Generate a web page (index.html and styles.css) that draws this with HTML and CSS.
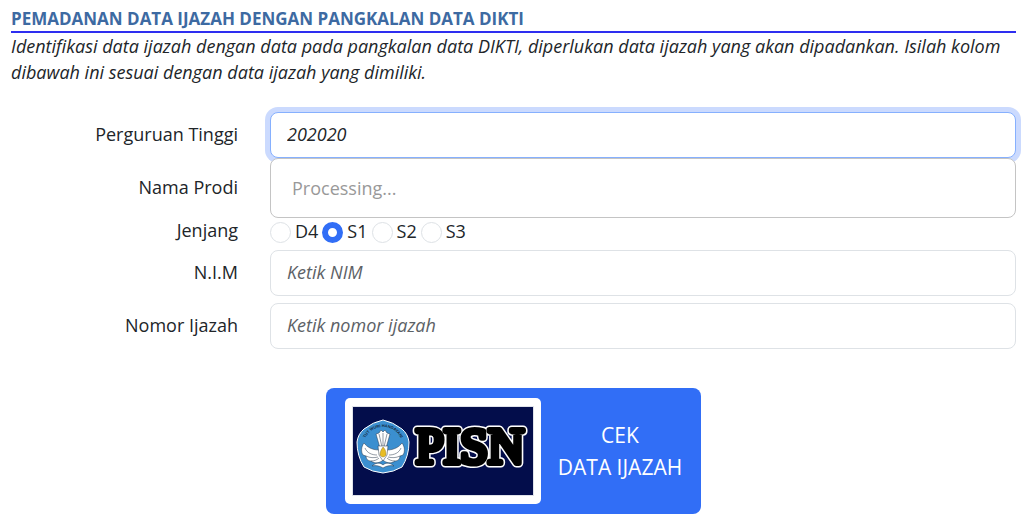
FILE: index.html
```html
<!doctype html>
<html lang="id">
<head>
    <meta charset="UTF-8">
    <meta name="viewport" content="width=device-width, initial-scale=1.0">
    <title>Pemadanan Data Ijazah</title>
    <link rel="stylesheet" href="styles.css">
</head>
<body>
<div class="page">
    <h1 class="title">PEMADANAN DATA IJAZAH DENGAN PANGKALAN DATA DIKTI</h1>
    <p class="intro">Identifikasi data ijazah dengan data pada pangkalan data DIKTI, diperlukan data ijazah yang akan dipadankan. Isilah kolom dibawah ini sesuai dengan data ijazah yang dimiliki.</p>

    <form class="form">
        <div class="row">
            <label class="label" for="pt">Perguruan Tinggi</label>
            <div class="field">
                <input class="input focused" type="text" id="pt" value="202020" autocomplete="off">
                <div class="suggest">Processing...</div>
            </div>
        </div>
        <div class="row">
            <label class="label" for="prodi">Nama Prodi</label>
            <div class="field">
                <input class="input" type="text" id="prodi">
            </div>
        </div>
        <div class="row row-radio">
            <span class="label" id="jenjang">Jenjang</span>
            <div class="radios" role="radiogroup" aria-labelledby="jenjang">
                <input type="radio" name="jenjang" id="d4"><label for="d4">D4</label>
                <input type="radio" name="jenjang" id="s1" checked><label for="s1">S1</label>
                <input type="radio" name="jenjang" id="s2"><label for="s2">S2</label>
                <input type="radio" name="jenjang" id="s3"><label for="s3">S3</label>
            </div>
        </div>
        <div class="row">
            <label class="label" for="nim">N.I.M</label>
            <div class="field">
                <input class="input" type="text" id="nim" placeholder="Ketik NIM">
            </div>
        </div>
        <div class="row">
            <label class="label" for="nomor">Nomor Ijazah</label>
            <div class="field">
                <input class="input" type="text" id="nomor" placeholder="Ketik nomor ijazah">
            </div>
        </div>

        <button class="submit" type="button">
            <span class="thumb">
                <svg class="logo" width="182" height="90" viewBox="0 0 182 90">
                    <rect width="182" height="90" fill="#dfe2ea"/>
                    <rect x="1" y="1" width="180" height="88" fill="#030d4b"/>
                    <!-- emblem -->
                    <path d="M31 14 Q41 16 50 23 Q56 28 57 36 Q57 50 50 61 Q42 66 31 67 Q20 66 12 61 Q5 50 5 36 Q6 28 12 23 Q21 16 31 14Z" fill="#3b8fd0" stroke="#fff" stroke-width="1"/>
                    <path id="arc" d="M12 36 C17 16 45 16 50 36" fill="none"/>
                    <text class="motto"><textPath href="#arc" startOffset="50%">TUT WURI HANDAYANI</textPath></text>
                    <g fill="#fff" stroke="#26364a" stroke-width=".5" stroke-linejoin="round">
                        <path d="M28 42 L24 28 L27 27 L29 24 L31 26 L33 24 L35 27 L38 28 L34 42Z"/>
                        <path d="M27 28 L30 41 M31 27 V41 M35 28 L32 41" fill="none"/>
                        <path d="M27 44 C20 44 15 41 12 37 C9 41 9 46 11 49 L14 50 C14 53 16 55 19 55 C23 58 28 57 31 54 C34 57 39 58 43 55 C46 55 48 53 48 50 L51 49 C53 46 53 41 50 37 C47 41 42 44 35 44 L31 41Z"/>
                        <path d="M13 42 C15 47 20 49 25 49 M14 50 C18 52 22 52 26 51 M19 55 C22 55 25 54 27 52 M49 42 C47 47 42 49 37 49 M48 50 C44 52 40 52 36 51 M43 55 C40 55 37 54 35 52" fill="none"/>
                        <path d="M26 40 H36 L35 49 L31 55 L27 49Z"/>
                        <path d="M31 59 C28 56 23 57 20 60 C24 59 28 60 31 62 C34 60 38 59 42 60 C39 57 34 56 31 59Z"/>
                    </g>
                    <path d="M31 41 C34 44 34 47 34 49 Q31 53 28 49 C28 46 29 44 31 41Z" fill="#e8bd24" stroke="#7b631c" stroke-width=".4"/>
                    <text class="pisn halo" x="118" y="57">PISN</text>
                    <text class="pisn" x="118" y="57">PISN</text>
                </svg>
            </span>
            <span class="caption">CEK<br>DATA IJAZAH</span>
        </button>
    </form>
</div>
</body>
</html>
```
FILE: styles.css
```css
*{
    box-sizing: border-box;
    margin: 0;
    padding: 0;
}
body{
    background: #fff;
    color: #212529;
    font-family: "Open Sans", "Noto Sans", sans-serif;
    font-size: 18px;
    line-height: 26px;
}
.page{
    padding: 6px 8px 6px 11px;
}
.title{
    font-size: 17px;
    line-height: 25px;
    font-weight: 700;
    color: #3d6aa2;
    border-bottom: 2px solid #2e2ef0;
}
.intro{
    font-style: italic;
}

.form{
    margin-top: 27px;
    display: flex;
    flex-direction: column;
    gap: 7px;
}
.row{
    display: grid;
    grid-template-columns: 227px 1fr;
    column-gap: 32px;
}
.label{
    text-align: right;
    padding-top: 9px;
}
.field{
    position: relative;
}
.input{
    display: block;
    width: 100%;
    height: 46px;
    padding: 0 16px 2px;
    border: 1px solid #dee2e6;
    border-radius: 8px;
    background: #fff;
    color: #212529;
    font: inherit;
    font-style: italic;
    outline: none;
}
.input::placeholder{
    color: #5c6166;
    opacity: 1;
}
.focused{
    border-color: #86b0fe;
    box-shadow: 0 0 0 5px #cbdafe;
}

/* autocomplete list, opens over the next row */
.suggest{
    position: absolute;
    top: 100%;
    left: 0;
    right: 0;
    z-index: 2;
    padding: 16px 21px;
    border: 1px solid #c4c4c4;
    border-radius: 8px;
    background: #fff;
    color: #999;
}

.row-radio{
    line-height: 24px;
}
.row-radio .label{
    padding-top: 0;
}
.radios{
    display: flex;
    align-items: center;
    gap: 4px;
}
.radios input{
    appearance: none;
    width: 21px;
    height: 21px;
    margin-top: 4px;
    border: 1px solid #dee2e6;
    border-radius: 50%;
    background: #fff;
}
.radios input:checked{
    border: 6px solid #316ef6;
}

.submit{
    align-self: center;
    display: flex;
    align-items: center;
    gap: 17px;
    margin-top: 32px;
    padding: 10px 19px;
    border: 0;
    border-radius: 8px;
    background: #316ef6;
    color: #fff;
    font: inherit;
    font-size: 21px;
    line-height: 32px;
}
.thumb{
    padding: 8px 7px;
    border-radius: 5px;
    background: #fff;
}
.logo{
    display: block;
}
.motto{
    font: bold 4px "Liberation Sans", sans-serif;
    fill: #14283c;
    text-anchor: middle;
}
.pisn{
    font: 50px "Liberation Serif", serif;
    text-anchor: middle;
    fill: #000;
    stroke: #000;
    stroke-width: 6px;
    stroke-linejoin: round;
}
.halo{
    stroke: #fff;
    stroke-width: 9px;
}
```
